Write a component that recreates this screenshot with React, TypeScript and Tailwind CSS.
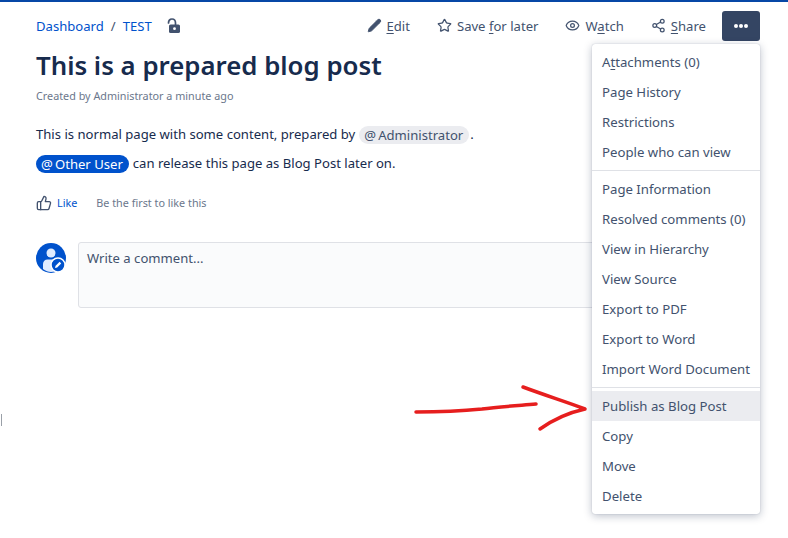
import { Pencil, Share2, Star, Eye, ThumbsUp } from "lucide-react";

const menuGroups = [
  [
    { label: "Attachments (0)", key: 1 },
    { label: "Page History" },
    { label: "Restrictions" },
    { label: "People who can view" },
  ],
  [
    { label: "Page Information" },
    { label: "Resolved comments (0)" },
    { label: "View in Hierarchy" },
    { label: "View Source" },
    { label: "Export to PDF" },
    { label: "Export to Word" },
    { label: "Import Word Document" },
  ],
  [
    { label: "Publish as Blog Post", active: true },
    { label: "Copy" },
    { label: "Move" },
    { label: "Delete" },
  ],
];

function Underlined({ text, at }: { text: string; at: number }) {
  return (
    <>
      {text.slice(0, at)}
      <span className="underline underline-offset-2">{text[at]}</span>
      {text.slice(at + 1)}
    </>
  );
}

function Menu() {
  return (
    <div className="absolute left-[592px] top-[42px] w-[168px] rounded-[3px] bg-white py-[3px] shadow-[0_2px_8px_rgba(9,30,66,0.28),0_0_1px_rgba(9,30,66,0.31)]">
      {menuGroups.map((group, i) => (
        <div key={i} className={i > 0 ? "mt-[3px] border-t border-[#dfe1e6] pt-[3px]" : ""}>
          {group.map((item) => (
            <div
              key={item.label}
              className={`flex h-[30px] items-center whitespace-pre px-[10px] pt-[2px] text-[13.2px] text-[#42526e] ${
                "active" in item && item.active ? "bg-[#ebecf0]" : ""
              }`}
            >
              {item.label === "Attachments (0)" ? <span><Underlined text={item.label} at={1} /></span> : item.label}
            </div>
          ))}
        </div>
      ))}
    </div>
  );
}

function Arrow() {
  return (
    <svg className="absolute left-[412px] top-[382px]" width="180" height="52" viewBox="0 0 180 52" fill="none">
      <path
        d="M4 28 C 30 28, 50 27, 70 25 C 85 23, 100 22, 124 20"
        stroke="#e61e1e"
        strokeWidth="3.5"
        strokeLinecap="round"
      />
      <path
        d="M111 3 C 135 12, 155 18, 173 25 C 155 29, 142 35, 128 45"
        stroke="#e61e1e"
        strokeWidth="3.5"
        strokeLinecap="round"
        strokeLinejoin="round"
      />
    </svg>
  );
}

export default function App() {
  return (
    <div className="relative h-[538px] w-[788px] overflow-hidden border-t-2 border-[#0747a6] bg-white font-['Noto_Sans',sans-serif] text-[13.1px] text-[#172b4d]">
      <div className="pl-[36px] pr-[28px]">
        <div className="flex h-[48px] items-center">
          <div className="flex items-center gap-[7px] pt-[2px]">
            <span className="text-[#0052cc]">Dashboard</span>
            <span className="text-[#42526e]">/</span>
            <span className="text-[#0052cc]">TEST</span>
          </div>
          <svg className="ml-[15px]" width="14" height="16" viewBox="0 0 14 16" fill="none">
            <path d="M1.5 5 C1.5 2.5 3 1 5 1 C7 1 8.5 2.5 8.5 5 V8" stroke="#42526e" strokeWidth="1.7" strokeLinecap="round" />
            <rect x="2" y="6.5" width="11" height="8.5" rx="1.6" fill="#42526e" />
            <circle cx="7.5" cy="10.7" r="1.4" fill="#fff" />
          </svg>
          <div className="ml-auto flex items-center text-[#42526e]">
            <div className="flex items-center gap-[4px]">
              <Pencil size={15} fill="#42526e" strokeWidth={1.5} />
              <span className="pt-[2px]"><Underlined text="Edit" at={0} /></span>
            </div>
            <div className="ml-[27px] flex items-center gap-[5px]">
              <Star size={15} strokeWidth={2} />
              <span className="pt-[2px]">Save <Underlined text="for" at={0} /> later</span>
            </div>
            <div className="ml-[27px] flex items-center gap-[5px]">
              <Eye size={15} strokeWidth={2} />
              <span className="pt-[2px]"><Underlined text="Watch" at={1} /></span>
            </div>
            <div className="ml-[27px] flex items-center gap-[5px]">
              <Share2 size={15} strokeWidth={2} />
              <span className="pt-[2px]"><Underlined text="Share" at={0} /></span>
            </div>
            <div className="ml-[16px] flex h-[30px] w-[38px] items-center justify-center gap-[1px] rounded-[3px] bg-[#344563]">
              <span className="h-[4px] w-[4px] rounded-full bg-white" />
              <span className="h-[4px] w-[4px] rounded-full bg-white" />
              <span className="h-[4px] w-[4px] rounded-full bg-white" />
            </div>
          </div>
        </div>

        <h1 className="mt-[-1px] text-[25.8px] font-semibold leading-[32px] text-[#172b4d]">This is a prepared blog post</h1>
        <p className="mt-[7px] text-[10.8px] leading-[16px] text-[#6b778c]">Created by Administrator a minute ago</p>

        <p className="mt-[21px] flex h-[20px] items-center">
          This is normal page with some content, prepared by
          <span className="ml-[4px] rounded-[9px] bg-[#ebecf0] pl-[5px] pr-[6px] leading-[18px] text-[#42526e]">@&#8201;Administrator</span>
          <span className="ml-[1px]">.</span>
        </p>
        <p className="mt-[9px] flex h-[20px] items-center">
          <span className="rounded-[9px] bg-[#0052cc] pl-[5px] pr-[6px] leading-[18px] text-white">@&#8201;Other User</span>
          <span className="ml-[4px]">can release this page as Blog Post later on.</span>
        </p>

        <div className="mt-[19px] flex h-[20px] items-center text-[10.8px]">
          <ThumbsUp size={16} color="#42526e" strokeWidth={2} />
          <span className="ml-[5px] text-[#0052cc]">Like</span>
          <span className="ml-[19px] text-[#6b778c]">Be the first to like this</span>
        </div>

        <div className="mt-[29px] flex gap-[10px]">
          <svg className="mt-[1px] shrink-0" width="32" height="32" viewBox="0 0 32 32">
            <circle cx="15" cy="15" r="15" fill="#0052cc" />
            <circle cx="15" cy="10" r="4.5" fill="#deebff" />
            <path d="M7 26 V21 C7 18.5 9 16.5 11.5 16.5 H18.5 C21 16.5 23 18.5 23 21 V26 C18 30 12 30 7 26 Z" fill="#deebff" />
            <circle cx="22" cy="22" r="7" fill="#0052cc" stroke="#fff" strokeWidth="1.5" />
            <path d="M19 25 L19.6 22.8 L23.6 18.8 L25.2 20.4 L21.2 24.4 Z" fill="#fff" />
          </svg>
          <div className="h-[66px] flex-1 rounded-[3px] border border-[#dfe1e6] bg-[#fafbfc] px-[8px] pt-[6px] text-[#42526e]">
            Write a comment...
          </div>
        </div>
      </div>

      <Menu />
      <Arrow />
      <div className="absolute left-[1px] top-[412px] h-[12px] w-[1px] bg-[#9aa0a8]" />
    </div>
  );
}
